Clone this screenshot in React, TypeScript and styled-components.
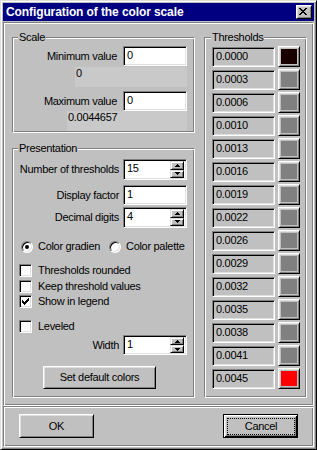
import styled, { createGlobalStyle, css } from "styled-components";

const GlobalStyle = createGlobalStyle`
  html, body {
    margin: 0;
    padding: 0;
    background: #c0c0c0;
  }
  * {
    box-sizing: border-box;
  }
  body {
    font-family: "Liberation Sans", Arial, sans-serif;
    font-size: 11px;
    line-height: 13px;
    letter-spacing: -0.3px;
    color: #000;
  }
`;

const raised = css`
  border: 1px solid;
  border-color: #fff #000 #000 #fff;
  box-shadow: inset 1px 1px #dfdfdf, inset -1px -1px #808080;
`;

const sunken = css`
  border: 1px solid;
  border-color: #808080 #fff #fff #808080;
  box-shadow: inset 1px 1px #000, inset -1px -1px #dfdfdf;
`;

const etched = css`
  border: 1px solid;
  border-color: #808080 #fff #fff #808080;
  box-shadow: inset 1px 1px #fff, inset -1px -1px #808080;
`;

const Window = styled.div`
  width: 317px;
  height: 450px;
  display: flex;
  flex-direction: column;
  background: #c0c0c0;
  border: 1px solid;
  border-color: #dfdfdf #000 #000 #dfdfdf;
  box-shadow: inset 1px 1px #fff, inset -1px -1px #808080;
  padding: 2px;
`;

const TitleBar = styled.div`
  height: 18px;
  flex-shrink: 0;
  display: flex;
  align-items: center;
  justify-content: space-between;
  padding: 0 2px 0 3px;
  background: #000080;
  color: #fff;
  font-weight: bold;
  font-size: 12px;
  letter-spacing: -0.1px;
`;

const CloseButton = styled.div`
  width: 16px;
  height: 14px;
  display: flex;
  align-items: flex-start;
  padding: 2px 0 0 2px;
  background: #c0c0c0;
  ${raised}
`;

const TopPanel = styled.div`
  margin-top: 1px;
  height: 384px;
  flex-shrink: 0;
  display: flex;
  padding: 14px 0 0 8px;
  ${etched}
`;

const BottomPanel = styled.div`
  height: 41px;
  flex-shrink: 0;
  display: flex;
  align-items: flex-start;
  justify-content: space-between;
  padding: 7px 15px 0 15px;
  ${etched}
`;

const LeftColumn = styled.div`
  width: 183px;
  display: flex;
  flex-direction: column;
`;

const GroupBox = styled.div<{ $height: number; $top?: number; $width: number }>`
  width: ${(p) => p.$width}px;
  height: ${(p) => p.$height}px;
  margin-top: ${(p) => p.$top ?? 0}px;
  flex-shrink: 0;
  display: flex;
  flex-direction: column;
  ${etched}
`;

const Caption = styled.div<{ $indent: number }>`
  align-self: flex-start;
  height: 13px;
  margin: -7px 0 0 ${(p) => p.$indent}px;
  padding: 0 1px;
  background: #c0c0c0;
`;

const GroupBody = styled.div<{ $pad: string }>`
  display: flex;
  flex-direction: column;
  padding: ${(p) => p.$pad};
`;

const FieldRow = styled.div<{ $top?: number }>`
  display: flex;
  align-items: center;
  justify-content: flex-end;
  margin-top: ${(p) => p.$top ?? 0}px;
`;

const Label = styled.span<{ $gap: number }>`
  margin-right: ${(p) => p.$gap}px;
  white-space: nowrap;
`;

const TextBox = styled.div<{ $height: number }>`
  width: 64px;
  height: ${(p) => p.$height}px;
  display: flex;
  align-items: stretch;
  padding: 1px 2px 1px 3px;
  background: #fff;
  ${sunken}
`;

const Value = styled.span`
  flex: 1;
  padding-top: 1px;
`;

const SpinColumn = styled.div`
  width: 14px;
  display: flex;
  flex-direction: column;
`;

const SpinButton = styled.div`
  flex: 1;
  display: flex;
  align-items: center;
  justify-content: center;
  background: #c0c0c0;
  border: 1px solid;
  border-color: #dfdfdf #000 #000 #dfdfdf;
  box-shadow: inset 1px 1px #fff, inset -1px -1px #808080;
`;

const DisplayBox = styled.div<{ $width: number }>`
  align-self: flex-end;
  width: ${(p) => p.$width}px;
  height: 20px;
  padding-left: 1px;
  background: #c9c9c9;
`;

const OptionRow = styled.div<{ $top: number; $indent?: number }>`
  height: 13px;
  display: flex;
  align-items: center;
  margin-top: ${(p) => p.$top}px;
  padding-left: ${(p) => p.$indent ?? 0}px;
`;

const RadioItem = styled.div<{ $width?: number }>`
  display: flex;
  align-items: center;
  width: ${(p) => (p.$width ? `${p.$width}px` : "auto")};
  white-space: nowrap;
`;

const RadioCircle = styled.span`
  width: 12px;
  height: 12px;
  flex-shrink: 0;
  display: flex;
  align-items: center;
  justify-content: center;
  margin-right: 5px;
  border-radius: 50%;
  background: #fff;
  ${sunken}
`;

const RadioDot = styled.span`
  width: 4px;
  height: 4px;
  border-radius: 50%;
  background: #000;
`;

const CheckBox = styled.span`
  width: 13px;
  height: 13px;
  flex-shrink: 0;
  display: flex;
  align-items: center;
  justify-content: center;
  margin-right: 6px;
  background: #fff;
  ${sunken}
`;

const Button = styled.div<{ $width: number; $height: number; $default?: boolean; $top?: number; $left?: number }>`
  width: ${(p) => p.$width}px;
  height: ${(p) => p.$height}px;
  margin-top: ${(p) => p.$top ?? 0}px;
  margin-left: ${(p) => p.$left ?? 0}px;
  display: flex;
  align-items: center;
  justify-content: center;
  background: #c0c0c0;
  ${(p) =>
    p.$default
      ? css`
          border: 1px solid #000;
          box-shadow: inset 1px 1px #fff, inset -1px -1px #000, inset 2px 2px #dfdfdf,
            inset -2px -2px #808080;
          padding: 3px 2px 2px 3px;
        `
      : raised}
`;

const FocusRing = styled.span`
  flex: 1;
  align-self: stretch;
  display: flex;
  align-items: center;
  justify-content: center;
  border: 1px dotted #000;
`;

const ThresholdList = styled.div`
  display: flex;
  flex-direction: column;
  gap: 2px;
  padding: 2px 0 0 7px;
`;

const ThresholdRow = styled.div`
  height: 21px;
  display: flex;
  align-items: flex-start;
  gap: 3px;
`;

const ThresholdValue = styled.div`
  width: 63px;
  height: 20px;
  margin-top: 1px;
  padding: 2px 0 0 3px;
  background: #c0c0c0;
  ${sunken}
`;

const ColorButton = styled.div`
  width: 22px;
  height: 21px;
  padding: 2px;
  background: #c0c0c0;
  ${raised}
`;

const Swatch = styled.div<{ $color: string }>`
  width: 100%;
  height: 100%;
  background: ${(p) => p.$color};
`;

const Arrow = ({ up }: { up?: boolean }) => (
  <svg width="5" height="3" viewBox="0 0 5 3" shapeRendering="crispEdges">
    <path d={up ? "M2 0h1v1H2z M1 1h3v1H1z M0 2h5v1H0z" : "M0 0h5v1H0z M1 1h3v1H1z M2 2h1v1H2z"} fill="#000" />
  </svg>
);

const Spinner = ({ value, height }: { value: string; height: number }) => (
  <TextBox $height={height}>
    <Value>{value}</Value>
    <SpinColumn>
      <SpinButton>
        <Arrow up />
      </SpinButton>
      <SpinButton>
        <Arrow />
      </SpinButton>
    </SpinColumn>
  </TextBox>
);

const Check = ({ checked, label, top }: { checked?: boolean; label: string; top: number }) => (
  <OptionRow $top={top}>
    <CheckBox>
      {checked && (
        <svg width="7" height="7" viewBox="0 0 7 7" shapeRendering="crispEdges">
          <path
            d="M6 0h1v1H6z M5 1h2v1H5z M0 2h1v1H0z M4 2h3v1H4z M0 3h2v1H0z M3 3h3v1H3z M0 4h5v1H0z M1 5h3v1H1z M2 6h1v1H2z"
            fill="#000"
          />
        </svg>
      )}
    </CheckBox>
    <span>{label}</span>
  </OptionRow>
);

const thresholds = [
  { value: "0.0000", color: "#180000" },
  { value: "0.0003", color: "#808080" },
  { value: "0.0006", color: "#808080" },
  { value: "0.0010", color: "#808080" },
  { value: "0.0013", color: "#808080" },
  { value: "0.0016", color: "#808080" },
  { value: "0.0019", color: "#808080" },
  { value: "0.0022", color: "#808080" },
  { value: "0.0026", color: "#808080" },
  { value: "0.0029", color: "#808080" },
  { value: "0.0032", color: "#808080" },
  { value: "0.0035", color: "#808080" },
  { value: "0.0038", color: "#808080" },
  { value: "0.0041", color: "#808080" },
  { value: "0.0045", color: "#ff0000" },
];

const App = () => {
  return (
    <>
      <GlobalStyle />
      <Window>
        <TitleBar>
          <span>Configuration of the color scale</span>
          <CloseButton>
            <svg width="8" height="7" viewBox="0 0 8 7" shapeRendering="crispEdges">
              <path
                d="M0 0h2v1H0z M6 0h2v1H6z M1 1h2v1H1z M5 1h2v1H5z M2 2h4v1H2z M3 3h2v1H3z M2 4h4v1H2z M1 5h2v1H1z M5 5h2v1H5z M0 6h2v1H0z M6 6h2v1H6z"
                fill="#000"
              />
            </svg>
          </CloseButton>
        </TitleBar>

        <TopPanel>
          <LeftColumn>
            <GroupBox $width={183} $height={96}>
              <Caption $indent={5}>Scale</Caption>
              <GroupBody $pad="2px 7px 0 0">
                <FieldRow>
                  <Label $gap={6}>Minimum value</Label>
                  <TextBox $height={20}>
                    <Value>0</Value>
                  </TextBox>
                </FieldRow>
                <DisplayBox $width={112} style={{ marginTop: 1 }}>
                  0
                </DisplayBox>
                <FieldRow $top={4}>
                  <Label $gap={6}>Maximum value</Label>
                  <TextBox $height={20}>
                    <Value>0</Value>
                  </TextBox>
                </FieldRow>
                <DisplayBox $width={120}>0.0044657</DisplayBox>
              </GroupBody>
            </GroupBox>

            <GroupBox $width={183} $height={250} $top={15}>
              <Caption $indent={5}>Presentation</Caption>
              <GroupBody $pad="4px 7px 0 6px">
                <FieldRow>
                  <Label $gap={4}>Number of thresholds</Label>
                  <Spinner value="15" height={21} />
                </FieldRow>
                <FieldRow $top={5}>
                  <Label $gap={4}>Display factor</Label>
                  <TextBox $height={20}>
                    <Value>1</Value>
                  </TextBox>
                </FieldRow>
                <FieldRow $top={2}>
                  <Label $gap={4}>Decimal digits</Label>
                  <Spinner value="4" height={21} />
                </FieldRow>

                <OptionRow $top={12} $indent={2}>
                  <RadioItem $width={88}>
                    <RadioCircle>
                      <RadioDot />
                    </RadioCircle>
                    Color gradien
                  </RadioItem>
                  <RadioItem>
                    <RadioCircle />
                    Color palette
                  </RadioItem>
                </OptionRow>

                <Check top={11} label="Thresholds rounded" />
                <Check top={3} label="Keep threshold values" />
                <Check top={2} label="Show in legend" checked />
                <Check top={12} label="Leveled" />

                <FieldRow $top={2}>
                  <Label $gap={4}>Width</Label>
                  <Spinner value="1" height={20} />
                </FieldRow>

                <Button $width={113} $height={23} $top={11} $left={24}>
                  Set default colors
                </Button>
              </GroupBody>
            </GroupBox>
          </LeftColumn>

          <GroupBox $width={103} $height={361} style={{ marginLeft: 9 }}>
            <Caption $indent={6}>Thresholds</Caption>
            <ThresholdList>
              {thresholds.map((t, index) => (
                <ThresholdRow key={index}>
                  <ThresholdValue>{t.value}</ThresholdValue>
                  <ColorButton>
                    <Swatch $color={t.color} />
                  </ColorButton>
                </ThresholdRow>
              ))}
            </ThresholdList>
          </GroupBox>
        </TopPanel>

        <BottomPanel>
          <Button $width={75} $height={24}>
            OK
          </Button>
          <Button $width={75} $height={24} $default>
            <FocusRing>Cancel</FocusRing>
          </Button>
        </BottomPanel>
      </Window>
    </>
  );
};

export default App;
